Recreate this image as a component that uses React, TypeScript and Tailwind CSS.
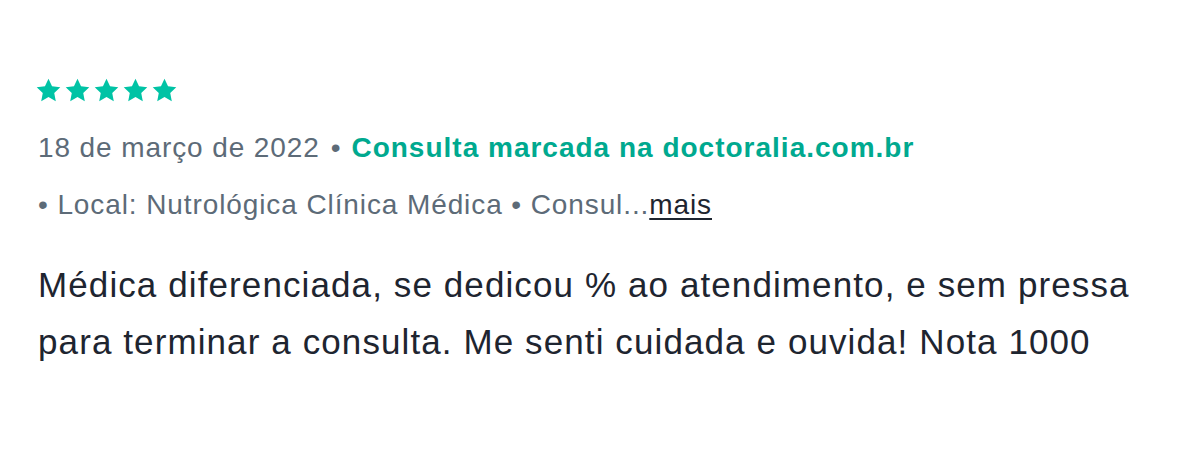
const Star = () => (
  <svg viewBox="0 0 24 24" className="w-[25px] h-[25px]" fill="#00c3a5">
    <path d="M12 .6l3.4 7.2 7.9 1-5.8 5.5 1.5 7.9L12 18.3l-7 3.9 1.5-7.9L.7 8.8l7.9-1z" />
  </svg>
);

const App = () => {
  return (
    <div
      className="w-[1200px] h-[460px] bg-white px-[36px] pt-[78px]"
      style={{ fontFamily: '"Liberation Sans", Arial, sans-serif' }}
    >
      {/* Estrelas */}
      <div className="flex items-center gap-[4px]">
        {[0, 1, 2, 3, 4].map((i) => (
          <Star key={i} />
        ))}
      </div>

      <div className="mt-[25px] pl-[2px] flex items-center text-[28px] leading-[40px] tracking-[0.9px] text-[#5d6b78]">
        <span>18 de março de 2022</span>
        <span className="ml-[11px] mr-[10px]">•</span>
        <span className="font-bold tracking-[1px] text-[#00a98f]">Consulta marcada na doctoralia.com.br</span>
      </div>

      <div className="mt-[17px] pl-[2px] text-[28px] leading-[40px] tracking-[0.9px] text-[#5d6b78]">
        • Local: Nutrológica Clínica Médica • Consul...
        <a className="underline text-[#1e2530] underline-offset-[4px]">mais</a>
      </div>

      <p className="mt-[31px] pl-[2px] text-[35px] leading-[57px] tracking-[1.1px] text-[#1e2530] w-[1150px]">
        Médica diferenciada, se dedicou % ao atendimento, e sem pressa para terminar a consulta. Me senti
        cuidada e ouvida! Nota 1000
      </p>
    </div>
  );
};

export default App;
